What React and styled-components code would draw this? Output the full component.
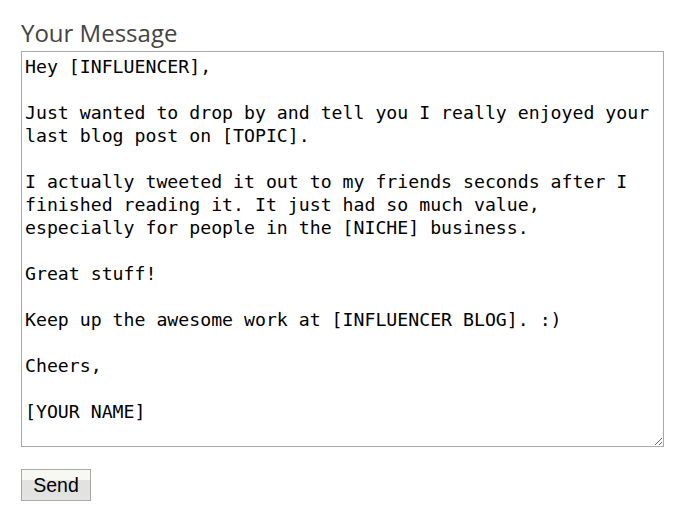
import React from "react";
import styled, { createGlobalStyle } from "styled-components";

const GlobalStyle = createGlobalStyle`
  body {
    margin: 0;
    background: #fff;
  }
`;

const Wrapper = styled.form`
  padding: 19px 21px 0;
  width: 643px;
`;
const Heading = styled.h2`
  font-family: "Open Sans", sans-serif;
  font-weight: 400;
  font-size: 24px;
  line-height: 1.2;
  color: #444;
  margin: 0 0 3px;
`;
const Message = styled.textarea`
  display: block;
  box-sizing: border-box;
  width: 643px;
  height: 396px;
  margin: 0;
  padding: 3px 3px;
  border: 1px solid #a9a9a9;
  font-family: "DejaVu Sans Mono", monospace;
  font-size: 18.2px;
  line-height: 23px;
  color: #000;
  outline: none;
  resize: both;
`;
const Button = styled.button`
  display: block;
  margin-top: 22px;
  width: 70px;
  height: 32px;
  padding: 1px 0 0;
  border: 1px solid #a8a8a8;
  background: linear-gradient(#f8f8f2 0 32%, #e2e3e1 32%);
  font-family: "Liberation Sans", Arial, sans-serif;
  font-size: 19.5px;
  color: #000;
`;

const text = `Hey [INFLUENCER],

Just wanted to drop by and tell you I really enjoyed your last blog post on [TOPIC].

I actually tweeted it out to my friends seconds after I finished reading it. It just had so much value, especially for people in the [NICHE] business.

Great stuff!

Keep up the awesome work at [INFLUENCER BLOG]. :)

Cheers,

[YOUR NAME]`;

const App = () => (
  <>
    <GlobalStyle />
    <Wrapper onSubmit={e => e.preventDefault()}>
      <Heading>Your Message</Heading>
      <Message defaultValue={text} spellCheck={false} />
      <Button type="submit">Send</Button>
    </Wrapper>
  </>
);
export default App;
